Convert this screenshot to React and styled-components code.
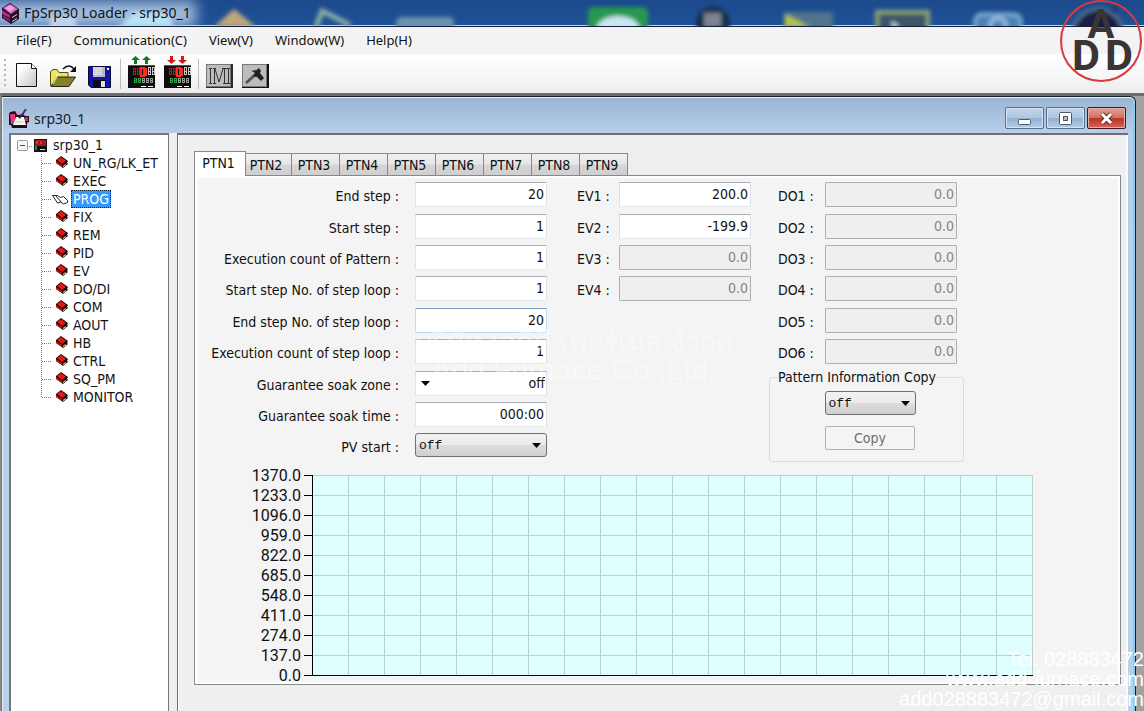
import React from "react";
import styled, { createGlobalStyle } from "styled-components";

const ui = `"DejaVu Sans Condensed", "DejaVu Sans", sans-serif`;
const chrome = `"Noto Sans", sans-serif`;

const Global = createGlobalStyle`
  *, *::before, *::after { box-sizing: border-box; }
  html, body { margin: 0; padding: 0; }
  body { background: #f0f0f0; color: #111; font: 14px/18px ${ui}; }
  button, input, select { font: inherit; color: inherit; margin: 0; }
`;

const Shell = styled.div`
  position: relative;
  display: flex;
  flex-direction: column;
  min-height: 100vh;
  overflow: hidden;
`;

const TitleBar = styled.header`
  position: relative;
  height: 27px;
  overflow: hidden;
  background: linear-gradient(#1c4a8c, #1e5296);
  border-bottom: 1px solid #10203c;
  box-shadow: inset 0 -1px 0 #c4d4e6;
`;

const DesktopGlow = styled.svg`
  position: absolute;
  inset: 0 auto auto 0;
`;

const TitleContent = styled.div`
  position: relative;
  display: flex;
  align-items: center;
  gap: 4px;
  height: 26px;
  padding-left: 1px;
`;

const AppTitle = styled.h1`
  margin: 0;
  font: 14px/26px ${chrome};
  color: #0c1420;
`;

const MenuBar = styled.nav`
  display: flex;
  gap: 2px;
  height: 27px;
  padding-left: 6px;
  background: #f3f3f3;
`;

const MenuItem = styled.button`
  padding: 0 10px;
  border: 0;
  background: none;
  font: 13px/27px ${chrome};
`;

const ToolBar = styled.div`
  display: flex;
  align-items: flex-start;
  height: 39px;
  padding: 0 4px;
  background: linear-gradient(#ffffff, #f6f6f6 60%, #ececec);
`;

const Grip = styled.span`
  width: 2px;
  height: 28px;
  margin: 5px 3px 0 0;
  background: repeating-linear-gradient(#b4b4b4 0 2px, transparent 2px 5px);
`;

const ToolSeparator = styled.span`
  width: 1px;
  height: 30px;
  margin: 5px 2px 0 3px;
  background: #bdbdbd;
`;

const ToolButton = styled.button`
  display: flex;
  align-items: flex-end;
  justify-content: center;
  width: 36px;
  height: 34px;
  padding: 0;
  border: 0;
  background: none;
`;

const Workspace = styled.main`
  flex: 1;
  display: flex;
  padding-right: 8px;
  border-top: 3px solid #6e6e6e;
  border-left: 1px solid #8a8a8a;
  background: #a2a2a2;
`;

const ChildWindow = styled.section`
  flex: 1;
  min-width: 0;
  display: flex;
  flex-direction: column;
  padding: 0 7px 0 7px;
  border: 1px solid #1a1f28;
  border-width: 1px 1px 0 1px;
  border-left-color: #6d7884;
  border-radius: 0 6px 0 0;
  background: linear-gradient(#9ab4d2, #b7cfea 36px, #b9d1ea);
  box-shadow: inset 0 1px 0 #e9f2fb, inset -2px 0 0 #86cdf0, inset 1px 0 0 #e4eefa;
`;

const ChildTitle = styled.div`
  display: flex;
  align-items: flex-end;
  height: 36px;
  gap: 4px;
  padding-bottom: 4px;
`;

const ChildName = styled.h2`
  flex: 1;
  margin: 0;
  font: 14px/20px ${chrome};
  color: #10202e;
`;

const Controls = styled.div`
  display: flex;
  gap: 2px;
  padding-right: 2px;
`;

const WindowButton = styled.button`
  display: flex;
  align-items: center;
  justify-content: center;
  width: 39px;
  height: 22px;
  padding: 0;
  border: 1px solid ${(p) => (p.$close ? "#4a1418" : "#566f8e")};
  border-radius: 2px;
  background: ${(p) =>
    p.$close
      ? "linear-gradient(#e3a295, #cf7262 48%, #b8331f 50%, #d2665a)"
      : "linear-gradient(#c3d6ea, #afc7e1 48%, #93b0d0 50%, #b3cbe6)"};
  box-shadow: inset 0 0 0 1px ${(p) => (p.$close ? "#e8b0a6" : "#d5e3f2")};
`;

const Body = styled.div`
  flex: 1;
  display: flex;
  background: #efefef;
`;

const TreePane = styled.nav`
  flex: 0 0 160px;
  border: 1px solid #777;
  border-width: 2px 1px 0 2px;
  background: #fff;
  padding: 1px 0 0 6px;
`;

const TreeList = styled.ul`
  margin: 0;
  padding: 0;
  list-style: none;
`;

const TreeRow = styled.div`
  display: flex;
  align-items: center;
  height: 18px;
  padding-left: ${(p) => (p.$leaf ? "23px" : "0")};
`;

const TreeLink = styled.a`
  margin-left: ${(p) => (p.$root ? "4px" : "2px")};
  padding: 0 1px;
  border: 1px ${(p) => (p.$selected ? "dotted #10243c" : "solid transparent")};
  background: ${(p) => (p.$selected ? "#3399ff" : "transparent")};
  color: ${(p) => (p.$selected ? "#fff" : "#151515")};
  line-height: 16px;
  text-decoration: none;
`;

const ContentPane = styled.div`
  flex: 1;
  min-width: 0;
  margin-left: 8px;
  padding: 16px 7px 0 16px;
  border: 1px solid #6f6f6f;
  border-width: 2px 0 0 1px;
  box-shadow: inset 1px 0 0 #fff, inset -2px 0 0 #fafafa;
`;

const TabList = styled.div`
  display: flex;
  align-items: flex-end;
  height: 24px;
`;

const Tab = styled.button`
  position: relative;
  z-index: ${(p) => (p.$active ? 1 : 0)};
  width: ${(p) => (p.$active ? "52px" : "48px")};
  height: ${(p) => (p.$active ? "25px" : "22px")};
  margin: ${(p) => (p.$active ? "0 -2px -1px 0" : "0")};
  padding: ${(p) => (p.$active ? "0 3px 2px 0" : "0 3px 0 0")};
  border: 1px solid #86898c;
  border-width: ${(p) => (p.$active ? "1px 1px 0 1px" : "1px 1px 0 0")};
  background: ${(p) => (p.$active ? "#fff" : "linear-gradient(#f1f1f1, #e6e6e6 48%, #d6d6d6 52%, #cfcfcf)")};
`;

const TabPage = styled.div`
  display: flex;
  flex-direction: column;
  gap: 18px;
  padding: 6px 0 7px;
  border: 1px solid #86898c;
  background: #f4f4f4;
  box-shadow: inset 3px 2px 0 #fff, inset -2px -2px 0 #fff;
`;

const Form = styled.form`
  display: grid;
  grid-template-columns: 220px 132px 24px 48px 132px 21px 53px 132px;
  grid-template-rows: 32px 31px 31px 32px 31px 32px 31px 31px 24px;
`;

const Label = styled.label`
  grid-column: ${(p) => p.$col};
  grid-row: ${(p) => p.$row};
  height: 28px;
  padding-left: 6px;
  line-height: 28px;
  white-space: nowrap;
`;

const StepLabel = styled(Label)`
  grid-column: 1;
  padding: 0 16px 0 0;
  text-align: right;
`;

const Field = styled.input`
  grid-column: ${(p) => p.$col};
  grid-row: ${(p) => p.$row};
  width: 132px;
  height: 25px;
  padding: 0 2px 2px;
  border: 1px solid;
  border-color: ${(p) => (p.$focused ? "#7f9db9 #c5daed #c5daed" : "#abadb3 #e2e3ea #e3e9ef")};
  border-radius: 1px;
  background: #fff;
  text-align: right;

  &:disabled {
    border-color: #afafaf;
    background: #efefef;
    color: #838383;
  }
`;

const SelectBox = styled.div`
  position: relative;
  grid-column: ${(p) => p.$col};
  grid-row: ${(p) => p.$row};
  width: ${(p) => p.$width};
`;

const Select = styled.select`
  appearance: none;
  display: block;
  width: 100%;
  height: ${(p) => (p.$plain ? "25px" : "24px")};
  padding: ${(p) => (p.$plain ? "0 1px" : "2px 3px 0")};
  border: 1px solid ${(p) => (p.$plain ? "#e2e3ea" : "#707070")};
  border-top-color: ${(p) => (p.$plain ? "#abadb3" : "#707070")};
  border-radius: ${(p) => (p.$plain ? "1px" : "3px")};
  background: ${(p) => (p.$plain ? "#fff" : "linear-gradient(#f2f2f2, #ebebeb 48%, #dddddd 50%, #cfcfcf)")};
  font: ${(p) => (p.$plain ? `14px/23px ${ui}` : `13px/20px "Liberation Mono", monospace`)};
  text-align-last: ${(p) => (p.$plain ? "right" : "left")};
`;

const Arrow = styled.svg`
  position: absolute;
  top: 10px;
  ${(p) => (p.$left ? "left: 6px;" : "right: 6px;")}
  pointer-events: none;
`;

const CopyGroup = styled.fieldset`
  grid-column: 6 / 9;
  grid-row: 7 / 10;
  display: flex;
  flex-direction: column;
  align-items: center;
  gap: 11px;
  width: 195px;
  height: 94px;
  min-width: 0;
  margin: -3px 0 0 18px;
  padding: 5px 0 0 7px;
  border: 1px solid #dcdcdc;
  border-radius: 3px;
`;

const Legend = styled.legend`
  padding: 0 1px;
  line-height: 18px;
`;

const CopyButton = styled.button`
  width: 90px;
  height: 24px;
  padding: 0;
  border: 1px solid #adb2b5;
  border-radius: 2px;
  background: #f4f4f4;

  &:disabled { color: #6d6d6d; }
`;

const ChartRow = styled.div`
  display: flex;
  padding-right: 87px;
`;

const AxisLabels = styled.ol`
  flex: 0 0 106px;
  margin: -9px 0 -11px;
  padding: 0;
  list-style: none;
  text-align: right;
  font: 16px/20px Roboto, sans-serif;
`;

const Plot = styled.svg`
  flex: 1;
  min-width: 0;
  height: 202px;
  margin-left: 3px;
  shape-rendering: crispEdges;
`;

const PlotArea = styled.svg`
  width: calc(100% - 8px);
`;

const Logo = styled.svg`
  position: absolute;
  top: 0;
  right: 0;
`;

const CompanyMark = styled.div`
  position: absolute;
  top: 328px;
  left: 415px;
  width: 318px;
  color: rgba(255, 255, 255, 0.45);
  text-align: center;
  white-space: nowrap;
  pointer-events: none;
`;

const CompanyLine = styled.div`
  font: ${(p) => (p.$thai ? "27px" : "30px")}/28px "Liberation Sans", sans-serif;
`;

const ContactMark = styled.address`
  position: absolute;
  right: 0;
  bottom: 2px;
  color: #fff;
  font: normal 20px/20px "Liberation Sans", sans-serif;
  text-align: right;
  pointer-events: none;
`;

const stepFields = [
  ["End step :", "20"],
  ["Start step :", "1"],
  ["Execution count of Pattern :", "1"],
  ["Start step No. of step loop :", "1"],
  ["End step No. of step loop :", "20"],
  ["Execution count of step loop :", "1"],
];
const evFields = ["200.0", "-199.9", "0.0", "0.0"];
const doFields = ["0.0", "0.0", "0.0", "0.0", "0.0", "0.0"];
const treeItems = ["UN_RG/LK_ET", "EXEC", "PROG", "FIX", "REM", "PID", "EV", "DO/DI", "COM", "AOUT", "HB", "CTRL", "SQ_PM", "MONITOR"];
const axis = ["1370.0", "1233.0", "1096.0", "959.0", "822.0", "685.0", "548.0", "411.0", "274.0", "137.0", "0.0"];

const Desktop = () => (
  <DesktopGlow width="1144" height="27" aria-hidden="true">
    <defs>
      <filter id="glass" x="-20%" y="-50%" width="140%" height="200%"><feGaussianBlur stdDeviation="2" /></filter>
      <filter id="halo" x="-20%" y="-80%" width="140%" height="260%"><feGaussianBlur stdDeviation="7" /></filter>
    </defs>
    <rect x="-10" y="1" width="206" height="26" fill="#b4c9e4" opacity=".9" filter="url(#halo)" />
    <g filter="url(#glass)">
      <rect x="50" y="17" width="26" height="12" fill="#dce8f4" opacity=".7" />
      <path d="M118 27 134 13h34l6 14z" fill="#b9e2f4" />
      <path d="M214 27 234 9l22 18z" fill="#c0a67c" />
      <path d="M316 27 322 11 350 25" fill="none" stroke="#8fb0a8" strokeWidth="5" />
      <rect x="396" y="17" width="58" height="14" rx="5" fill="#6d91ac" />
      <rect x="588" y="7" width="60" height="26" rx="6" fill="#27984f" />
      <ellipse cx="618" cy="30" rx="22" ry="14" fill="#c9e6f2" />
      <circle cx="713" cy="24" r="17" fill="#132a48" />
      <rect x="704" y="13" width="17" height="14" fill="#7d8590" />
      <rect x="784" y="12" width="49" height="20" fill="#53738c" />
      <path d="M785 14 810 27H785z" fill="#b6c246" />
      <rect x="877" y="12" width="51" height="22" fill="#3d5568" stroke="#8fa378" strokeWidth="4" />
      <path d="m892 21 8 6h-8z" fill="#d8e0e6" />
      <rect x="975" y="14" width="46" height="20" rx="7" fill="#4b83b8" stroke="#8ab4d6" strokeWidth="3" />
      <circle cx="998" cy="26" r="8" fill="none" stroke="#a9c9e2" strokeWidth="3" />
      <circle cx="1098" cy="34" r="25" fill="#1c1d46" stroke="#54788e" strokeWidth="3" />
    </g>
  </DesktopGlow>
);

const AppIcon = () => (
  <svg width="19" height="22" viewBox="0 0 19 22" aria-hidden="true">
    <path d="M1 6 9 1l9 6v10l-8 5-9-6z" fill="#25101f" />
    <path d="M2 6 9 2l8 5-7 5z" fill="#d665c4" />
    <path d="m4 6 5-3 5 3-5 4z" fill="#f0a0e4" />
    <path d="m1 8 8 5v3l-8-4z" fill="#a52c93" />
    <path d="m2 13 7 4v3l-7-4z" fill="#7c1e6c" />
    <path d="m11 15 5-3v1l-5 3zm0 4 5-3v1l-5 3z" fill="#e6d4e4" />
  </svg>
);

const NewIcon = () => (
  <svg width="24" height="26" viewBox="0 0 24 26" aria-hidden="true">
    <defs><linearGradient id="sheet" x1="0" y1="0" x2="1" y2="1"><stop offset=".2" stopColor="#fff" /><stop offset="1" stopColor="#c4c4c4" /></linearGradient></defs>
    <path d="M1.500 1.500h15l5 5v18h-20z" fill="url(#sheet)" stroke="#111" />
    <path d="M16.500 1.500v5h5" fill="#fff" stroke="#111" />
  </svg>
);

const OpenIcon = () => (
  <svg width="28" height="24" viewBox="0 0 28 24" aria-hidden="true">
    <path d="M1.500 22V7.500L4 5.500h4l2 3h9v4" fill="#e9e46a" stroke="#55500e" />
    <path d="m2 22.500 6-9.500h18.500L20 22.500z" fill="#85812a" stroke="#26240a" />
    <path d="m4 20 4-7V9" fill="none" stroke="#f8f5a8" />
    <path d="M14 5c4-4 8-4 11 0" fill="none" stroke="#111" strokeWidth="1.500" />
    <path d="M27 2v6h-6z" fill="#111" />
  </svg>
);

const SaveIcon = () => (
  <svg width="23" height="22" viewBox="0 0 23 22" aria-hidden="true">
    <path d="M.5.5h22v21H3l-2.500-2.500z" fill="#1414a8" stroke="#08083a" />
    <path d="M5 1h12v10H5z" fill="#b9b9c2" />
    <path d="M5 1h9v8H5z" fill="#d6d6dc" />
    <path d="M5 14h13v8H5z" fill="#0b0b1c" />
    <path d="M13 15h4v6h-4z" fill="#e2e2ea" />
    <path d="M19 2h2v2h-2z" fill="#fff" />
  </svg>
);

const digitPath = (x, y, w, h) => `M${x} ${y}h${w}v${h}h${-w}zM${x} ${y + h / 2}h${w}`;

const DeviceIcon = ({ down }) => (
  <svg width="27" height="32" viewBox="0 0 27 32" aria-hidden="true">
    {[7, 18].map((x) => (
      <path
        key={x}
        d={down ? `M${x - 1} 0h3v4h3l-4.500 4-4.500-4h3z` : `M${x - 1} 8h3V4h3L${x + 0.5} 0 ${x - 4} 4h3z`}
        fill={down ? "#d3181c" : "#16761f"}
      />
    ))}
    <path d="M0 9h27v23H0z" fill="#0d0d0d" />
    <path d="M0 9h27v1H0z" fill="#555" />
    <g fill="none" strokeWidth="1" shapeRendering="crispEdges">
      <path d={[5, 9].map((x) => digitPath(x + 0.5, 12.5, 2, 6)).join("")} stroke="#b51a1a" />
      <path d="M13 11.500h3v8h-3zM18 11.500v8" stroke="#ff2b20" strokeWidth="2" />
      <path d={[20, 24].map((x) => digitPath(x + 0.5, 11.5, 2, 7)).join("")} stroke="#c9c9c9" />
      <path d={[6, 10].map((x) => digitPath(x + 0.5, 22.5, 2, 4)).join("")} stroke="#29a046" />
      <path d={[14, 18, 22].map((x) => digitPath(x + 0.5, 22.5, 2, 4)).join("")} stroke="#929b94" />
    </g>
    <path d="M13 30h5v1h-5zM20 30h5v1h-5z" fill="#fff" />
  </svg>
);

const MonitorIcon = () => (
  <svg width="27" height="24" viewBox="0 0 27 24" aria-hidden="true">
    <path d="M0 0h27v24H0z" fill="#2a2a2a" />
    <path d="M0 0h25v23H0z" fill="#777" />
    <path d="M1 1h23v21H1z" fill="#bcbcbc" />
    <path d="M3 4.500h3M4.500 5v14M3 19.500h3M7 4.500h3M9 5l4 13 4-13M16 4.500h8M18.500 5v14M22.500 5v14M17 19.500h7M8.500 5v14M7 19.500h3" fill="none" stroke="#333" />
  </svg>
);

const HammerIcon = () => (
  <svg width="27" height="24" viewBox="0 0 27 24" aria-hidden="true">
    <path d="M0 0h27v24H0z" fill="#111" />
    <path d="M0 0h25v23H0z" fill="#777" />
    <path d="M1 1h23v21H1z" fill="#bcbcbc" />
    <path d="m4 19 10-9" stroke="#555" strokeWidth="3" />
    <path d="m10 7 5-1 2-2 2 3-1 2 4 5-3 3-4-4-4-1 2-3z" fill="#222" />
    <path d="m10 7 5-1 2-2" fill="none" stroke="#555" />
  </svg>
);

const DocumentIcon = () => (
  <svg width="21" height="20" viewBox="0 0 21 20" aria-hidden="true">
    <path d="M1 3 6 2l2 3 6 0 2 2h4v6l-2 1v5H3l-1-3H0V5z" fill="#1b1118" />
    <path d="M1 5h5v10H2z" fill="#e2377f" />
    <path d="M7 8h8l2 8H4z" fill="#f6f6f0" />
    <path d="M16 8h3v4h-3z" fill="#d82058" />
    <path d="m7 6 4 4 1-2z" fill="#222" />
    <path d="m11 6 2 0 4-6" fill="none" stroke="#402890" strokeWidth="2" />
    <path d="M7 2h4v4H8z" fill="#d89ab8" />
    <path d="M6 13h8" stroke="#c8c8c8" />
  </svg>
);

const Expander = () => (
  <svg width="11" height="11" viewBox="0 0 11 11" aria-hidden="true">
    <rect x=".5" y=".5" width="10" height="10" rx="1" fill="#f5f5f5" stroke="#979797" />
    <path d="M3 5.500h5" stroke="#3b4f8c" />
  </svg>
);

const RootIcon = () => (
  <svg width="19" height="13" viewBox="0 0 19 13" aria-hidden="true">
    <path d="M1 7.500h4" stroke="#888" strokeDasharray="1 1" />
    <path d="M6 0h13v13H6z" fill="#101510" />
    <path d="M7 1h11v6H7z" fill="#a61c1c" />
    <path d="M8 2h2v3H8zM12 2h2v3h-2z" fill="#d33" />
    <path d="M7 7h2v4H7z" fill="#2c8a4c" />
    <path d="M12 10h5v1h-5z" fill="#ddd" />
  </svg>
);

const LeafIcon = ({ last, open }) => (
  <svg width="29" height="18" viewBox="0 0 29 18" aria-hidden="true">
    <path d={last ? "M1.500 0v10" : "M1.500 0v18"} stroke="#777" strokeDasharray="1 1" />
    <path d="M2 9.500h10" stroke="#777" strokeDasharray="1 1" />
    {open ? (
      <path d="M12.500 5.500h5l3 2 3-1 4 4v2l-4 1.500-3-2-3 1zM16 6l6 7" fill="#fff" stroke="#222" />
    ) : (
      <>
        <path d="m16 6 5-4 7 5-1 2 1 1-5 4-7-5z" fill="#1c0806" />
        <path d="m17 6 4-3 5 4-4 3z" fill="#e01b16" />
        <path d="m16 7 6 4v2l-6-4z" fill="#c51512" />
        <path d="m23 12 3-2v1l-3 2z" fill="#eee" />
      </>
    )}
  </svg>
);

const Caret = ({ left }) => (
  <Arrow $left={left} width="9" height="5" viewBox="0 0 9 5" aria-hidden="true"><path d="M0 0h9L4.500 5z" fill="#050505" /></Arrow>
);

const FieldPair = ({ id, label, value, col, row, disabled }) => (
  <>
    <Label htmlFor={id} $col={col} $row={row}>{label}</Label>
    <Field id={id} $col={col + 1} $row={row} defaultValue={value} disabled={disabled} />
  </>
);

const Chart = () => (
  <ChartRow>
    <AxisLabels>{axis.map((v) => <li key={v}>{v}</li>)}</AxisLabels>
    <Plot>
      {axis.map((v, i) => <rect key={v} x="0" y={i * 20} width="9" height="1" fill="#000" />)}
      <PlotArea x="8" y="0" height="202">
        <rect width="100%" height="200" fill="#dfffff" />
        {axis.slice(0, 10).map((v, i) => <line key={v} x1="0" x2="100%" y1={i * 20 + 0.5} y2={i * 20 + 0.5} stroke="#bccfd2" />)}
        {Array.from({ length: 19 }, (_, i) => <line key={i} x1={`${(i + 1) * 5}%`} x2={`${(i + 1) * 5}%`} y1="0" y2="200" stroke="#bccfd2" />)}
        <line x1="100%" x2="100%" y1="0" y2="200" stroke="#bccfd2" strokeWidth="2" />
        <rect width="1" height="201" fill="#000" />
        <rect y="200" width="100%" height="1" fill="#000" />
      </PlotArea>
    </Plot>
  </ChartRow>
);

export default function App() {
  return (
    <Shell>
      <Global />
      <TitleBar>
        <Desktop />
        <TitleContent><AppIcon /><AppTitle>FpSrp30 Loader - srp30_1</AppTitle></TitleContent>
      </TitleBar>
      <MenuBar aria-label="Menu">
        {["File(F)", "Communication(C)", "View(V)", "Window(W)", "Help(H)"].map((m) => <MenuItem key={m}>{m}</MenuItem>)}
      </MenuBar>
      <ToolBar role="toolbar">
        <Grip />
        <ToolButton aria-label="New"><NewIcon /></ToolButton>
        <ToolButton aria-label="Open"><OpenIcon /></ToolButton>
        <ToolButton aria-label="Save"><SaveIcon /></ToolButton>
        <ToolSeparator />
        <ToolButton aria-label="Upload"><DeviceIcon /></ToolButton>
        <ToolButton aria-label="Download"><DeviceIcon down /></ToolButton>
        <ToolSeparator />
        <ToolButton aria-label="Monitor"><MonitorIcon /></ToolButton>
        <ToolButton aria-label="Settings"><HammerIcon /></ToolButton>
      </ToolBar>
      <Workspace>
        <ChildWindow>
          <ChildTitle>
            <DocumentIcon />
            <ChildName>srp30_1</ChildName>
            <Controls>
              <WindowButton aria-label="Minimize">
                <svg width="13" height="13" aria-hidden="true"><rect x=".5" y="7.500" width="12" height="5" rx="1" fill="#fff" stroke="#4b5a6c" /></svg>
              </WindowButton>
              <WindowButton aria-label="Maximize">
                <svg width="13" height="13" aria-hidden="true"><rect x=".5" y=".5" width="12" height="12" rx="1" fill="#fff" stroke="#4b5a6c" /><rect x="4.500" y="4.500" width="4" height="4" fill="#a9bdd4" stroke="#4b5a6c" /></svg>
              </WindowButton>
              <WindowButton $close aria-label="Close">
                <svg width="15" height="13" aria-hidden="true"><path d="m3 2 9 9m0-9-9 9" stroke="#5a3035" strokeWidth="5" /><path d="m3 2 9 9m0-9-9 9" stroke="#fff" strokeWidth="3" /></svg>
              </WindowButton>
            </Controls>
          </ChildTitle>
          <Body>
            <TreePane aria-label="Sections">
              <TreeRow><Expander /><RootIcon /><TreeLink href="#root" $root>srp30_1</TreeLink></TreeRow>
              <TreeList>
                {treeItems.map((t, i) => (
                  <li key={t}>
                    <TreeRow $leaf>
                      <LeafIcon open={t === "PROG"} last={i === treeItems.length - 1} />
                      <TreeLink href={`#${t}`} $selected={t === "PROG"}>{t}</TreeLink>
                    </TreeRow>
                  </li>
                ))}
              </TreeList>
            </TreePane>
            <ContentPane>
              <TabList role="tablist">
                {Array.from({ length: 9 }, (_, i) => (
                  <Tab key={i} role="tab" aria-selected={i === 0} $active={i === 0}>{`PTN${i + 1}`}</Tab>
                ))}
              </TabList>
              <TabPage role="tabpanel">
                <Form onSubmit={(e) => e.preventDefault()}>
                  {stepFields.map(([label, value], i) => (
                    <React.Fragment key={label}>
                      <StepLabel htmlFor={`step${i}`} $row={i + 1}>{label}</StepLabel>
                      <Field id={`step${i}`} $col={2} $row={i + 1} $focused={i === 4} defaultValue={value} />
                    </React.Fragment>
                  ))}
                  <StepLabel htmlFor="zone" $row={7}>Guarantee soak zone :</StepLabel>
                  <SelectBox $col={2} $row={7} $width="132px">
                    <Select id="zone" $plain><option>off</option></Select>
                    <Caret left />
                  </SelectBox>
                  <StepLabel htmlFor="time" $row={8}>Guarantee soak time :</StepLabel>
                  <Field id="time" $col={2} $row={8} defaultValue="000:00" />
                  <StepLabel htmlFor="pv" $row={9}>PV start :</StepLabel>
                  <SelectBox $col={2} $row={9} $width="132px">
                    <Select id="pv"><option>off</option></Select>
                    <Caret />
                  </SelectBox>
                  {evFields.map((v, i) => (
                    <FieldPair key={i} id={`ev${i}`} label={`EV${i + 1} :`} value={v} col={4} row={i + 1} disabled={i > 1} />
                  ))}
                  {doFields.map((v, i) => (
                    <FieldPair key={i} id={`do${i}`} label={`DO${i + 1} :`} value={v} col={7} row={i + 1} disabled />
                  ))}
                  <CopyGroup>
                    <Legend>Pattern Information Copy</Legend>
                    <SelectBox $width="91px">
                      <Select aria-label="Pattern"><option>off</option></Select>
                      <Caret />
                    </SelectBox>
                    <CopyButton disabled>Copy</CopyButton>
                  </CopyGroup>
                </Form>
                <Chart />
              </TabPage>
            </ContentPane>
          </Body>
        </ChildWindow>
      </Workspace>
      <CompanyMark>
        <CompanyLine $thai>บริษัท เอดีดี เฟอร์เนส จำกัด</CompanyLine>
        <CompanyLine>Add Furnace Co.,Ltd.</CompanyLine>
      </CompanyMark>
      <ContactMark>
        <div>Tel: 028883472</div>
        <div>www.add-furnace.com</div>
        <div>add028883472@gmail.com</div>
      </ContactMark>
      <Logo width="84" height="84" viewBox="0 0 84 84" role="img" aria-label="ADD">
        <circle cx="41" cy="41" r="40" fill="none" stroke="#d8383e" strokeWidth="2" />
        <g fill="#3a3535" fontFamily="Roboto, sans-serif" fontWeight="bold" textAnchor="middle">
          <text x="41" y="38" fontSize="40">A</text>
          <text x="26" y="70" fontSize="43">D</text>
          <text x="59" y="70" fontSize="43">D</text>
          <text x="55" y="14" fontSize="10" fontWeight="normal">®</text>
        </g>
      </Logo>
    </Shell>
  );
}
